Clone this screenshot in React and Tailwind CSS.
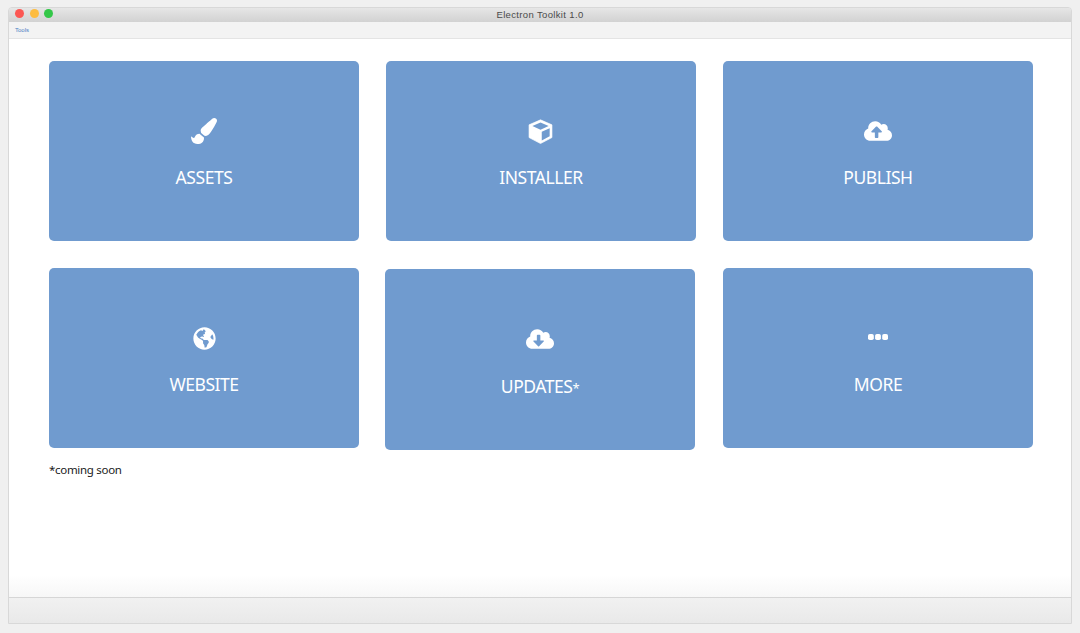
import React from "react";
import { FaPaintBrush, FaCloudUploadAlt, FaCloudDownloadAlt, FaGlobeAmericas } from "react-icons/fa";

const CubeIcon = () => (
  <svg viewBox="0 0 24 24" className="w-[25px] h-[25px] -ml-px" fill="none">
    <path d="M12 0.8 L23 5.6 V17.8 L12 23.6 L1 17.8 V5.6 Z" fill="#fff" stroke="#fff" strokeWidth="0.6" strokeLinejoin="round" />
    <path d="M12 3.4 L19.8 6.8 L12 10.2 L4.2 6.8 Z" fill="#709bcf" />
    <path d="M13.2 12.2 L20.8 8.9 V16.6 L13.2 20.6 Z" fill="#709bcf" />
  </svg>
);

const DotsIcon = () => (
  <svg viewBox="0 0 22 8" className="w-[22px] h-[8px] -mt-[2px]" fill="#fff">
    <rect x="1" y="1" width="5.8" height="6" rx="1.8" />
    <rect x="8.1" y="1" width="5.8" height="6" rx="1.8" />
    <rect x="15.2" y="1" width="5.8" height="6" rx="1.8" />
  </svg>
);

function Card({ icon, label, className = "h-[180px]", labelClass = "mt-[20px]" }) {
  return (
    <div className={`w-[310px] rounded-[5px] bg-[#709bcf] text-white flex flex-col items-center pt-[56px] ${className}`}>
      <div className="h-[28px] flex items-center justify-center">{icon}</div>
      <div className={`${labelClass} text-[17.5px] leading-[24px] tracking-[-0.45px]`}>{label}</div>
    </div>
  );
}

export default function App() {
  return (
    <div
      className="w-[1080px] h-[633px] bg-[#f0f0f0] px-[8px] pt-[7px] pb-[9px] overflow-hidden"
      style={{ fontFamily: '"Noto Sans", sans-serif' }}
    >
      <div className="h-full flex flex-col border border-[#d8d8d8] rounded-t-[4px] overflow-hidden">
        <div className="relative h-[14px] shrink-0 bg-gradient-to-b from-[#e6e6e6] to-[#d2d2d2] flex items-center justify-center">
          <div className="absolute left-[6px] top-[1px] flex gap-[5.5px]">
            <span className="w-[9px] h-[9px] rounded-full bg-[#fc5753]" />
            <span className="w-[9px] h-[9px] rounded-full bg-[#fdbc40]" />
            <span className="w-[9px] h-[9px] rounded-full bg-[#33c748]" />
          </div>
          <span
            className="text-[9.5px] leading-[14px] tracking-[0.35px] text-[#4a4a4a]"
            style={{ fontFamily: '"Liberation Sans", sans-serif' }}
          >
            Electron Toolkit 1.0
          </span>
        </div>
        <div className="h-[17px] shrink-0 bg-[#f3f3f3] border-b border-[#e4e4e4] flex items-center pl-[6px]">
          <span
            className="text-[6px] leading-none text-[#4a80c4]"
            style={{ fontFamily: '"Liberation Sans", sans-serif' }}
          >
            Tools
          </span>
        </div>
        <div className="flex-1 bg-gradient-to-b from-white from-[96%] to-[#f7f7f7] pl-[40px] pt-[22px]">
          <div className="flex gap-[27px]">
            <Card icon={<FaPaintBrush className="w-[26px] h-[26px]" />} label="ASSETS" />
            <Card icon={<CubeIcon />} label="INSTALLER" />
            <Card icon={<FaCloudUploadAlt className="w-[28px] h-[28px]" />} label="PUBLISH" />
          </div>
          <div className="flex gap-[27px] mt-[27px] items-start">
            <Card icon={<FaGlobeAmericas className="w-[23px] h-[23px]" />} label="WEBSITE" />
            <Card
              icon={<FaCloudDownloadAlt className="w-[28px] h-[28px]" />}
              label={<>UPDATES<span className="text-[13px]">*</span></>}
              className="h-[181px] -ml-px mt-px"
              labelClass="mt-[21px]"
            />
            <div className="ml-px">
              <Card icon={<DotsIcon />} label="MORE" />
            </div>
          </div>
          <div className="mt-[11px] text-[11.5px] leading-[18px] tracking-[-0.3px] text-[#1a1a1a]">*coming soon</div>
        </div>
        <div className="h-[26px] shrink-0 border-t border-[#d6d6d6] bg-gradient-to-b from-[#f1f1f1] to-[#e9e9e9]" />
      </div>
    </div>
  );
}
